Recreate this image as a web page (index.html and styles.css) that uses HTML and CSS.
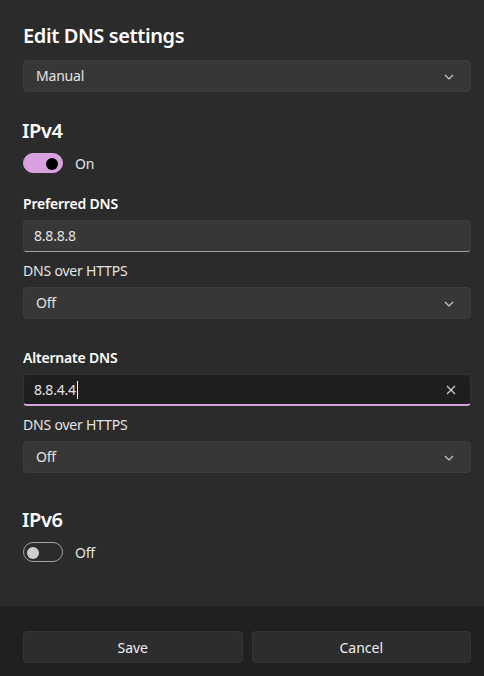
FILE: index.html
```html
<!DOCTYPE html>
<html lang="en">

<head>
  <meta charset="UTF-8">
  <meta name="viewport" content="width=device-width, initial-scale=1.0">
  <title>Edit DNS settings</title>
  <link rel="stylesheet" href="styles.css">
</head>

<body>
  <div class="dialog">
    <h1>Edit DNS settings</h1>
    <div class="select">
      <span>Manual</span>
      <svg class="chevron" width="10" height="6" viewBox="0 0 10 6"><path d="M1 1l4 4 4-4" fill="none" stroke="#cfcfcf" stroke-width="1.1"/></svg>
    </div>

    <h2>IPv4</h2>
    <div class="switch-row">
      <span class="switch on"><span class="knob"></span></span>
      <span>On</span>
    </div>

    <div class="label bold first">Preferred DNS</div>
    <div class="input"><span>8.8.8.8</span></div>
    <div class="label">DNS over HTTPS</div>
    <div class="select">
      <span>Off</span>
      <svg class="chevron" width="10" height="6" viewBox="0 0 10 6"><path d="M1 1l4 4 4-4" fill="none" stroke="#cfcfcf" stroke-width="1.1"/></svg>
    </div>

    <div class="label bold second">Alternate DNS</div>
    <div class="input focused">
      <span>8.8.4.4<span class="caret"></span></span>
      <svg class="clear" width="10" height="10" viewBox="0 0 10 10"><path d="M1 1l8 8M9 1l-8 8" fill="none" stroke="#d0d0d0" stroke-width="1.2"/></svg>
    </div>
    <div class="label">DNS over HTTPS</div>
    <div class="select">
      <span>Off</span>
      <svg class="chevron" width="10" height="6" viewBox="0 0 10 6"><path d="M1 1l4 4 4-4" fill="none" stroke="#cfcfcf" stroke-width="1.1"/></svg>
    </div>

    <h2 class="v6">IPv6</h2>
    <div class="switch-row">
      <span class="switch"><span class="knob"></span></span>
      <span>Off</span>
    </div>
  </div>

  <div class="footer">
    <button class="btn">Save</button>
    <button class="btn">Cancel</button>
  </div>
</body>

</html>
```

FILE: styles.css
```css
html,
body {
  margin: 0;
  font-family: "Noto Sans", "Open Sans", sans-serif;
  font-size: 14px;
  letter-spacing: -0.2px;
  color: #e4e4e4;
  background: #2b2b2b;
}

.dialog {
  height: 606px;
  box-sizing: border-box;
  padding: 22px 13px 0 23px;
}

h1,
h2 {
  margin: 0;
  font-size: 20px;
  line-height: 28px;
  font-weight: 600;
  letter-spacing: -0.4px;
  color: #fff;
}

h1 {
  margin-bottom: 10px;
}

h2 {
  margin: 25px 0 8px -1px;
}

h2.v6 {
  margin-top: 33px;
}

.select,
.input {
  height: 32px;
  box-sizing: border-box;
  display: flex;
  align-items: center;
  justify-content: space-between;
  padding: 0 16px 0 12px;
  background: #373737;
  border: 1px solid #3c3c3c;
  border-radius: 4px;
  line-height: 20px;
}

.input {
  padding-left: 10px;
  border-bottom: 1px solid #a0a0a0;
}

.input.focused {
  background: #1f1f1f;
  border-color: #333;
  border-bottom: 2px solid #d7a3dd;
  padding-right: 14px;
}

.caret {
  display: inline-block;
  width: 1px;
  height: 18px;
  margin-left: 1px;
  background: #fff;
  vertical-align: -4px;
}

.chevron {
  margin-top: 1px;
}

.switch-row {
  display: flex;
  align-items: center;
  gap: 12px;
  height: 20px;
  line-height: 20px;
}

.switch-row span:last-child {
  margin-top: 1px;
}

.switch {
  width: 40px;
  height: 20px;
  box-sizing: border-box;
  border-radius: 10px;
  border: 1px solid #a2a2a2;
  display: flex;
  align-items: center;
  padding: 0 3px;
}

.switch .knob {
  width: 12px;
  height: 12px;
  border-radius: 50%;
  background: #cdcdcd;
}

.switch.on {
  background: #d9a0e0;
  border-color: #d9a0e0;
  justify-content: flex-end;
  padding: 0 4px;
}

.switch.on .knob {
  background: #000;
}

.label {
  line-height: 20px;
  margin: 9px 0 6px;
}

.label.bold {
  font-weight: 600;
  color: #fff;
  margin-bottom: 6px;
}

.label.first {
  margin-top: 21px;
}

.label.second {
  margin-top: 29px;
}

.input + .label {
  margin-top: 9px;
  margin-bottom: 6px;
}

.footer {
  height: 70px;
  box-sizing: border-box;
  background: #202020;
  padding: 25px 13px 0 23px;
  display: flex;
  gap: 9px;
}

.btn {
  flex: 1;
  height: 32px;
  background: #2d2d2d;
  border: 1px solid #353535;
  border-radius: 4px;
  color: #f0f0f0;
  font-family: "Noto Sans", "Open Sans", sans-serif;
  font-size: 14px;
}
```
